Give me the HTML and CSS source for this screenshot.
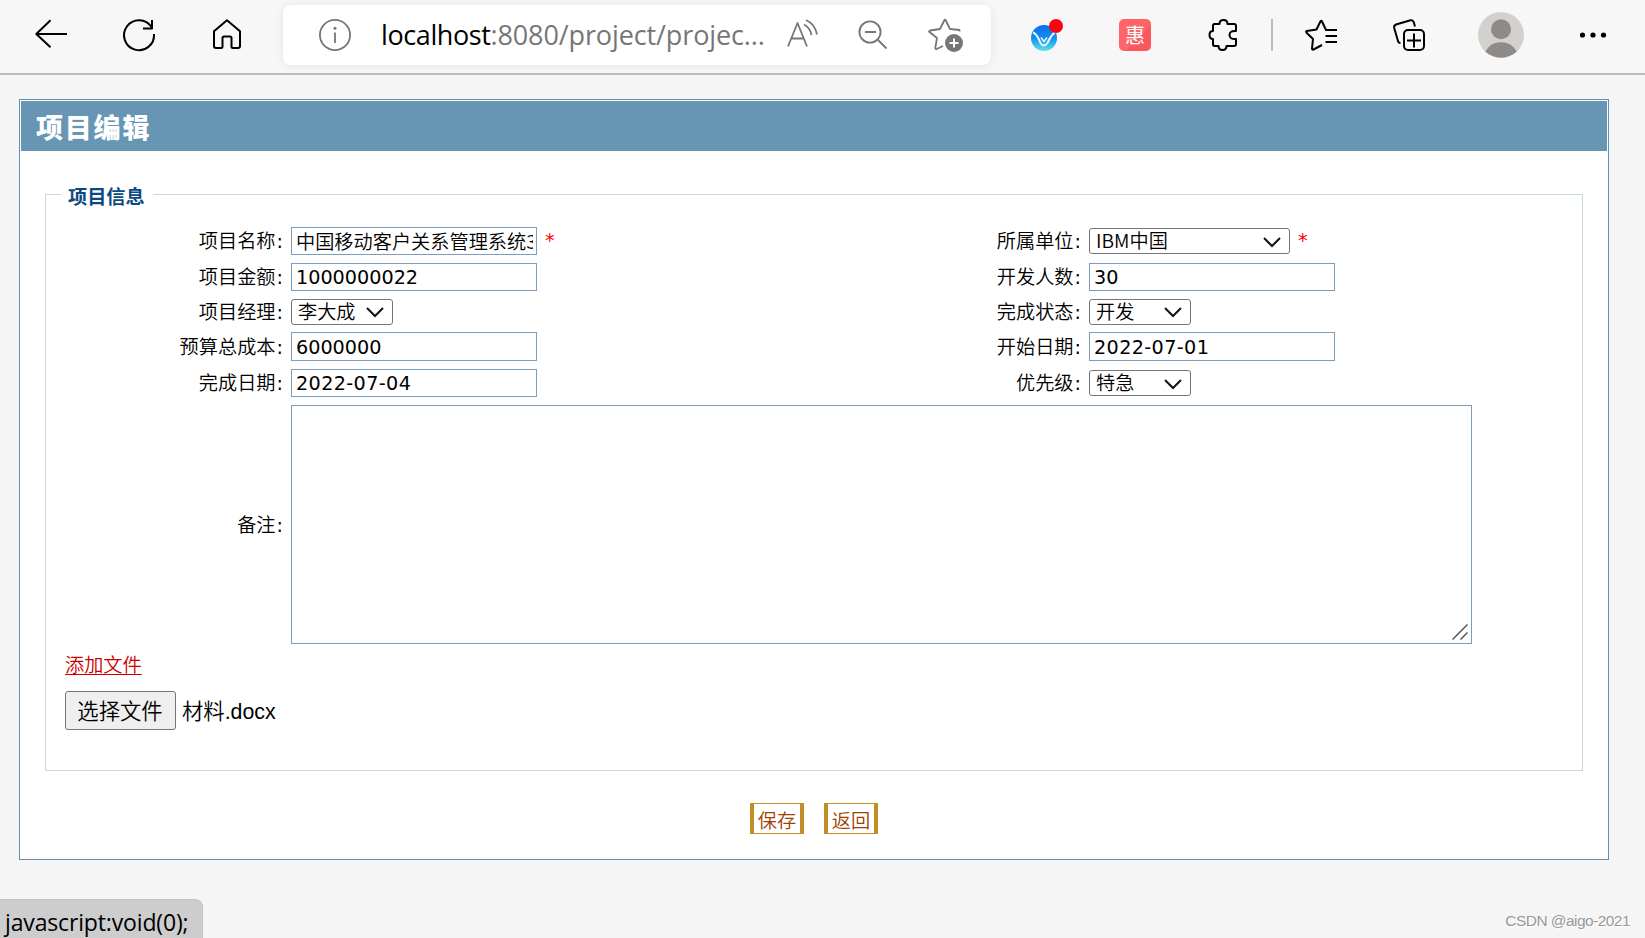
FILE: index.html
```
<!DOCTYPE html>
<html lang="zh-CN">
<head>
<meta charset="utf-8">
<title>项目编辑</title>
<link rel="stylesheet" href="styles.css">
</head>
<body>
<header class="toolbar">
  <nav class="nav">
    <svg class="icon" viewBox="0 0 32 32"><path d="M15.5 1.2 1.3 15 15.5 28.2M1.3 15H32"/></svg>
    <svg class="icon" viewBox="0 0 32 32"><path d="M28.6 8A15 15 0 1 0 31 15M29 1v8.500H20"/></svg>
    <svg class="icon" viewBox="0 0 32 32"><path d="M16 1.2 3 12.2V27q0 2 2 2h5q1.500 0 1.500-1.500V19q0-1.500 1.500-1.500h6q1.500 0 1.500 1.500v8.500q0 1.500 1.500 1.500h5q2 0 2-2V12.200Z"/></svg>
  </nav>
  <div class="address">
    <svg class="icon gray info" viewBox="0 0 32 32"><circle cx="16" cy="16" r="15.100"/><path d="M16 13.500V24"/><circle class="fill" cx="16" cy="9.300" r="1.500"/></svg>
    <div class="url"><b>localhost</b><span>:8080/project/projec...</span></div>
    <svg class="icon gray" viewBox="0 0 32 32"><path d="M2 27.500 11.500 4l9.500 23.500M5.500 19.500h12.500M18 5.500q6 3 7.500 10.500M20 1q9 4 11 14.500"/></svg>
    <svg class="icon gray" viewBox="0 0 32 32"><circle cx="12" cy="13" r="10.600"/><path d="M7 13h11M20 21 28.500 29.500"/></svg>
    <svg class="icon gray star" viewBox="0 0 36 36"><path d="M32.500 14.500v-1.500L23 12 18.800 3.500q-.8-1.500-1.600 0L13 12 3 13.500q-1.500.500-.500 1.500L10 21 8.300 31q0 1.500 1.500 1L16 29"/><circle class="fill" cx="27" cy="26" r="9"/><path class="plus" d="M27 21.500v9M22.500 26h9"/></svg>
  </div>
  <div class="tools">
    <svg class="icon" viewBox="0 0 32 32"><defs><linearGradient id="g" x2="0" y2="1"><stop offset="0" stop-color="#0a6cf0"/><stop offset=".5" stop-color="#128df2"/><stop offset="1" stop-color="#5ce6e8"/></linearGradient></defs><circle cx="13" cy="19" r="13" fill="url(#g)" stroke="none"/><path d="M2 13.500Q6 15 9.500 24q3 5 7 0 2.500-6.500 8-11.500" stroke="#eaf8ff" stroke-width="2"/><path d="M10 18.500l3 4 3-4" stroke="#eaf8ff" stroke-width="1.500"/><circle cx="25" cy="7" r="7" fill="#f90510" stroke="none"/></svg>
    <div class="deal">惠</div>
    <svg class="icon" viewBox="0 0 32 32"><path d="M7 5h5.500q0-4 4-4t4 4H27q2 0 2 2v5q-6.500-.5-6.500 4t6.500 4v5q0 2-2 2H19.500q0 4-4 4t-4-4H7.500q-1.500 0-1.500-2v-5q-3.500 0-3.500-4t3.500-4V7q0-2 1.500-2Z"/></svg>
    <i class="divider"></i>
    <svg class="icon" viewBox="0 0 32 32"><path d="M32 11H21L17 2.500q-.8-1.500-1.600 0L11.500 10.500 1.800 12q-1.200.4-.4 1.500L8 20 7 29.500q0 1.500 1.500 1L17 26M20.500 17H32M20.500 23H32"/></svg>
    <svg class="icon" viewBox="0 0 32 32"><path d="M7.500 24Q5.500 24 5 22L1.200 9Q.7 6.500 3 5.500L17.500 1.300Q20 .800 20.800 3.200L22 7.500"/><rect x="11" y="11" width="20" height="20" rx="4"/><path d="M21 14.500v14M14 21.500h14"/></svg>
    <svg class="avatar" viewBox="0 0 46 46"><circle cx="23" cy="23" r="23" fill="#d2d1cd"/><circle cx="23" cy="17.200" r="10" fill="#8e8a87"/><path d="M7.300 39.500a18 18 0 0 1 31.400 0A23 23 0 0 1 7.300 39.500" fill="#8e8a87"/></svg>
    <svg class="icon dots" viewBox="0 0 32 32"><circle cx="5.500" cy="16" r="2.600"/><circle cx="16" cy="16" r="2.600"/><circle cx="26.500" cy="16" r="2.600"/></svg>
  </div>
</header>
<main class="panel">
  <h1>项目编辑</h1>
  <fieldset>
    <legend>项目信息</legend>
    <div class="form">
      <label>项目名称<b>:</b></label><div class="cell"><input class="name" value="中国移动客户关系管理系统3"><em>*</em></div>
      <label>所属单位<b>:</b></label><div class="cell"><div class="select wide">IBM中国<svg viewBox="0 0 18 11"><path d="M1 1l8 8 8-8"/></svg></div><em>*</em></div>
      <label>项目金额<b>:</b></label><div class="cell"><input value="1000000022"></div>
      <label>开发人数<b>:</b></label><div class="cell"><input value="30"></div>
      <label>项目经理<b>:</b></label><div class="cell"><div class="select">李大成<svg viewBox="0 0 18 11"><path d="M1 1l8 8 8-8"/></svg></div></div>
      <label>完成状态<b>:</b></label><div class="cell"><div class="select">开发<svg viewBox="0 0 18 11"><path d="M1 1l8 8 8-8"/></svg></div></div>
      <label>预算总成本<b>:</b></label><div class="cell"><input value="6000000"></div>
      <label>开始日期<b>:</b></label><div class="cell"><input class="date" value="2022-07-01"></div>
      <label>完成日期<b>:</b></label><div class="cell"><input class="date" value="2022-07-04"></div>
      <label>优先级<b>:</b></label><div class="cell"><div class="select">特急<svg viewBox="0 0 18 11"><path d="M1 1l8 8 8-8"/></svg></div></div>
      <label>备注<b>:</b></label>
      <div class="memo"><svg viewBox="0 0 16 16"><path d="M.5 15.500 15.500.5M8.500 15.500l7-7"/></svg></div>
    </div>
    <a class="add" href="#">添加文件</a>
    <div class="file"><button>选择文件</button><span>材料.docx</span></div>
  </fieldset>
  <div class="actions"><button>保存</button><button>返回</button></div>
</main>
<div class="status">javascript:void(0);</div>
<div class="mark">CSDN @aigo-2021</div>
</body>
</html>
```
FILE: styles.css
```
* { box-sizing: border-box; }
body {
  margin: 0;
  height: 938px;
  overflow: hidden;
  background: #f5f5f5;
  color: #000;
  font: 19.2px/24px "DejaVu Sans", "Noto Sans CJK SC", sans-serif;
}
.toolbar {
  display: flex;
  align-items: flex-start;
  height: 75px;
  background: #f7f7f7;
  border-bottom: 2px solid #bcbcbc;
}
.icon {
  width: 32px;
  height: 32px;
  flex: none;
  fill: none;
  stroke: #000;
  stroke-width: 2;
  stroke-linejoin: round;
  overflow: visible;
}
.gray { stroke: #767676; stroke-width: 1.8; }
.gray .fill { fill: #767676; stroke: none; }
.gray .plus { stroke: #fff; stroke-width: 2; }
.nav { display: flex; gap: 56px; padding: 19px 40px 0 35px; }
.address {
  display: flex;
  align-items: center;
  width: 708px;
  height: 60px;
  margin-top: 5px;
  padding-left: 36px;
  border-radius: 8px;
  background: #fff;
  box-shadow: 0 1px 10px rgba(0, 0, 0, .08);
}
.info { margin-right: 30px; }
.url {
  display: flex;
  width: 405px;
  color: #767676;
  font: 27px/36px "Open Sans", sans-serif;
  white-space: nowrap;
}
.url b { color: #000; font-weight: 400; letter-spacing: -.4px; }
.url span { letter-spacing: -.12px; }
.address .icon + .icon { margin-left: 40px; }
.address .icon + .star { width: 36px; height: 36px; margin-left: 37px; }
.tools { display: flex; padding: 19px 0 0 40px; }
.tools > * + * { margin-left: 56px; }
.deal {
  width: 32px;
  height: 32px;
  border-radius: 5px;
  background: linear-gradient(135deg, #ff6468 60%, #f9585e 60%);
  color: #fff;
  font: 20px/31px "Noto Sans CJK SC", sans-serif;
  text-align: center;
}
.tools .divider { width: 2px; height: 32px; margin-left: 32px; background: #bcbcbc; }
.tools .divider + .icon { margin-left: 32px; }
.tools .avatar { width: 46px; height: 46px; margin: -7px 0 0 53px; }
.tools .dots { margin-left: 53px; fill: #000; stroke: none; }
.panel {
  width: 1590px;
  height: 761px;
  margin: 24px 0 0 19px;
  padding: 1px;
  border: 1px solid #5d90b2;
  background: #fff;
}
h1 {
  height: 50px;
  margin: 0;
  padding-left: 15px;
  background: #6795b4;
  color: #fff;
  font: 900 27px/51px "Noto Sans CJK SC", sans-serif;
  letter-spacing: 1.8px;
}
fieldset {
  width: 1538px;
  height: 590px;
  margin: 30px 0 0 24px;
  padding: 0 0 0 19px;
  border: 1px solid #c8d8e3;
}
legend {
  height: 26px;
  margin-left: -4px;
  padding: 0 8px 0 7px;
  color: #0b4a80;
  font: 700 19.200px/30px "Noto Sans CJK SC", sans-serif;
}
.form {
  display: grid;
  grid-template-columns: 226px 572px 226px 383px;
  grid-template-rows: 28px 28px 25px 29px 28px 239px;
  row-gap: 8px;
  margin-top: 20px;
}
.form label {
  align-self: center;
  padding: 2px 8px 0 0;
  font-weight: 350;
  text-align: right;
}
.form b { padding-left: 1px; font-weight: 400; }
.cell { display: flex; align-items: center; }
input {
  width: 246px;
  height: 100%;
  padding: 1px 3px 0 4px;
  border: 1px solid #7f9db9;
  font: inherit;
  outline: none;
}
.name { padding-top: 0; font-family: "Noto Sans CJK SC", sans-serif; font-weight: 350; }
.date { letter-spacing: .37px; }
em { margin-left: 8px; color: #f00; font-style: normal; }
.select {
  display: flex;
  justify-content: space-between;
  align-items: center;
  width: 102px;
  height: 26px;
  padding: 0 8px 2px 6px;
  border: 1px solid #767676;
  border-radius: 3px;
  background: #fff;
  font: 350 19.200px/22px "Noto Sans CJK SC", sans-serif;
}
.select.wide { width: 201px; }
.select svg { width: 18px; height: 11px; margin-top: 4px; fill: none; stroke: #111; stroke-width: 2; }
.memo {
  grid-column: 2 / 5;
  display: flex;
  justify-content: flex-end;
  align-items: flex-end;
  padding: 3px;
  border: 1px solid #7f9db9;
}
.memo svg { width: 16px; height: 16px; fill: none; stroke: #555; stroke-width: 1.5; }
.add {
  display: block;
  width: max-content;
  margin-top: 10px;
  color: #c00;
  font-weight: 350;
  text-underline-offset: 2px;
  text-decoration-thickness: 1px;
}
.file {
  display: flex;
  align-items: center;
  gap: 6px;
  margin-top: 13px;
  font: 350 21.333px/32px "Liberation Sans", "Noto Sans CJK SC", sans-serif;
}
.file span { padding-top: 2px; }
.file button {
  width: 111px;
  height: 39px;
  padding: 2px 1px 0 0;
  border: 1px solid #767676;
  border-radius: 3px;
  background: #efefef;
  font: inherit;
}
.actions { display: flex; justify-content: center; gap: 20px; margin-top: 32px; }
.actions button {
  width: 54px;
  height: 31px;
  padding: 3px 0 0;
  border: solid #c28e26;
  border-width: 1px 4px;
  background: #fff;
  color: #a04000;
  font: 350 19.200px/24px "Noto Sans CJK SC", sans-serif;
}
.status {
  position: absolute;
  left: 0;
  bottom: 0;
  width: 203px;
  height: 39px;
  padding-left: 5px;
  border-top: 1px solid #c2c2c2;
  border-right: 1px solid #c2c2c2;
  border-top-right-radius: 8px;
  background: #cdcdcd;
  font: 23px/45px "Open Sans", sans-serif;
  letter-spacing: -.15px;
  white-space: nowrap;
}
.mark {
  position: absolute;
  right: 15px;
  bottom: 7px;
  color: #999;
  font: 15.500px/20px "Liberation Sans", sans-serif;
  letter-spacing: -.55px;
  text-shadow: 1px 1px 0 #fff;
  white-space: nowrap;
}
```
